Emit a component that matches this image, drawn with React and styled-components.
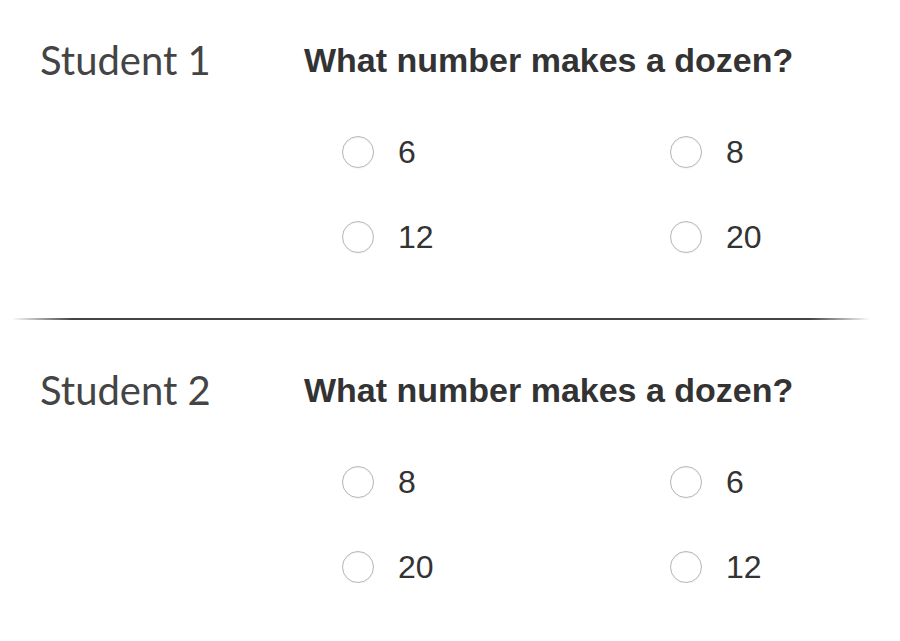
import React from "react";
import styled, { createGlobalStyle } from "styled-components";

const Global = createGlobalStyle`
  html, body { margin: 0; padding: 0; background: #fff; }
  body { font-family: "Liberation Sans", Arial, sans-serif; }
`;

const Page = styled.div`
  width: 900px;
  padding-top: 30px;
`;

const Block = styled.section`
  display: grid;
  grid-template-columns: 264px 1fr;
  padding-left: 40px;
`;

const StudentLabel = styled.div`
  font-family: "Lato", sans-serif;
  font-size: 40px;
  color: #444;
  line-height: 60px;
`;

const Question = styled.h2`
  margin: 0;
  font-family: "Liberation Sans", Arial, sans-serif;
  font-weight: bold;
  font-size: 34px;
  color: #333;
  line-height: 60px;
`;

const Options = styled.div`
  display: grid;
  grid-template-columns: 328px 1fr;
  row-gap: 53px;
  margin-top: 46px;
  margin-left: 38px;
`;

const Option = styled.label`
  display: flex;
  align-items: center;
  gap: 24px;
  font-size: 32px;
  color: #333;
  height: 32px;
`;

const Radio = styled.span`
  box-sizing: border-box;
  width: 32px;
  height: 32px;
  border-radius: 50%;
  border: 1px solid #b8b8b8;
  background: #fff;
  box-shadow: inset 0 1px 1px rgba(0,0,0,0.06), 0 1px 1px rgba(0,0,0,0.04);
  flex: none;
`;

const Divider = styled.hr`
  border: 0;
  height: 2px;
  margin: 65px 30px 40px 12px;
  background: linear-gradient(to right, rgba(68,68,68,0) 0%, #444 7%, #444 93%, rgba(68,68,68,0) 100%);
`;

const data = [
  { name: "Student 1", opts: ["6", "8", "12", "20"] },
  { name: "Student 2", opts: ["8", "6", "20", "12"] },
];

export default function App() {
  return (
    <Page>
      <Global />
      {data.map((d, i) => (
        <React.Fragment key={d.name}>
          {i > 0 && <Divider />}
          <Block>
            <StudentLabel>{d.name}</StudentLabel>
            <div>
              <Question>What number makes a dozen?</Question>
              <Options>
                {d.opts.map((o) => (
                  <Option key={o}>
                    <Radio />
                    {o}
                  </Option>
                ))}
              </Options>
            </div>
          </Block>
        </React.Fragment>
      ))}
    </Page>
  );
}
